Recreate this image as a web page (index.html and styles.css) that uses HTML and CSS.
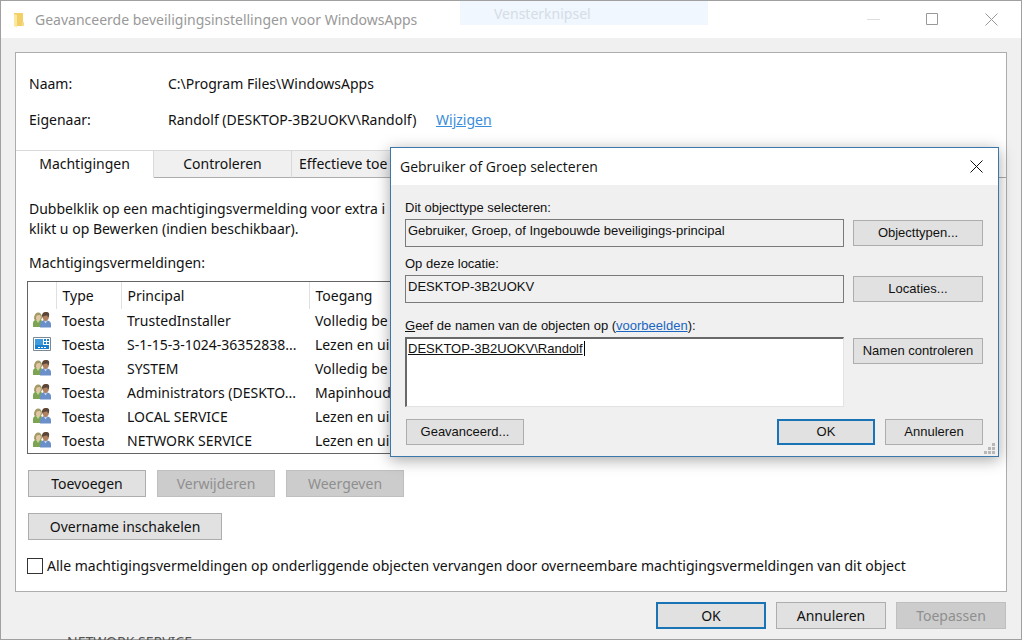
FILE: index.html
```
<!DOCTYPE html>
<html lang="nl">
<head>
    <meta charset="UTF-8">
    <meta name="viewport" content="width=device-width, initial-scale=1.0">
    <title>Geavanceerde beveiligingsinstellingen voor WindowsApps</title>
    <link rel="stylesheet" href="styles.css">
</head>
<body>
    <!-- Shared icons -->
    <svg class="sprite" aria-hidden="true">
        <symbol id="icon-users" viewBox="0 0 18 16">
            <path d="M0 15V11q0-2 2-3l3-1 3 1q2 1 2 3v4z" fill="#7da453"/>
            <path d="M3 8l2 3 2-3v-2H3z" fill="#c5d3a0"/>
            <path d="M1 7q0-6 4-6.500q4 0 4 5.500l-1 2H2z" fill="#a39a69"/>
            <path d="M3.500 3.500L7 3l1 2-1 3-2 1-2-2z" fill="#e0c9a0"/>
            <path d="M7 15.500V12q0-2 2-3l3-1.500 4 1.500q2 1 2 3v3.500z" fill="#6b8fc9"/>
            <path d="M11 8.500l1.500 3 2-3V7H11z" fill="#c6d6ef"/>
            <path d="M9.500 5V3q.5-3 3.500-3t3 3l-.5 4-2 2h-2l-1.500-2z" fill="#b08260"/>
            <path d="M9 4q0-4 4-4t3 4l-1 2-.5-2.500-4 .5L10 6z" fill="#5a4638"/>
        </symbol>
        <symbol id="icon-app" viewBox="0 0 18 14">
            <path d="M.5.5h17v13H.5z" fill="#fff" stroke="#7b8793"/>
            <path d="M2 2h14v10H2z" fill="#1b7fd0"/>
            <path d="M2 2h8v6H2z" fill="#3f9ade"/>
            <path d="M10.500 2v6M13.500 2v6M10 4.500h6M10 7.500h6" stroke="#fff" fill="none"/>
            <path d="M5 10.500h2M8 10.500h2M11 10.500h2" stroke="#fff" fill="none"/>
        </symbol>
        <symbol id="icon-close" viewBox="0 0 13 13">
            <path d="M.5.5l12 12M12.500.5l-12 12" fill="none" stroke="currentColor"/>
        </symbol>
    </svg>

    <main class="window">
        <header class="titlebar">
            <svg class="folder" viewBox="0 0 12 16" width="12" height="16" aria-hidden="true">
                <path d="M1 1h9v13H1z" fill="#f3cf68"/>
                <path d="M1 2l3 1v12.500L1 14z" fill="#fbe6a2"/>
                <path d="M9 10h2v4H9z" fill="#f7dc8a"/>
            </svg>
            <h1>Geavanceerde beveiligingsinstellingen voor WindowsApps</h1>
            <div class="window-controls">
                <button type="button" class="minimize" aria-label="Minimaliseren"><svg width="13" height="13"><path d="M0 6.500h13" stroke="currentColor"/></svg></button>
                <button type="button" aria-label="Maximaliseren"><svg width="13" height="13"><path d="M.5.5h11v11H.5z" fill="none" stroke="currentColor"/></svg></button>
                <button type="button" aria-label="Sluiten"><svg width="13" height="13"><use href="#icon-close"/></svg></button>
            </div>
            <span class="snip-hint">Vensterknipsel</span>
        </header>

        <div class="content">
            <section class="panel">
                <dl class="info">
                    <dt>Naam:</dt>
                    <dd>C:\Program Files\WindowsApps</dd>
                    <dt>Eigenaar:</dt>
                    <dd>Randolf (DESKTOP-3B2UOKV\Randolf) <a href="#">Wijzigen</a></dd>
                </dl>

                <div class="tabs" role="tablist">
                    <button type="button" class="tab active" role="tab" aria-selected="true">Machtigingen</button>
                    <button type="button" class="tab" role="tab">Controleren</button>
                    <button type="button" class="tab tab-effective" role="tab">Effectieve toe</button>
                </div>

                <div class="tab-page">
                    <p class="help">Dubbelklik op een machtigingsvermelding voor extra i<br>klikt u op Bewerken (indien beschikbaar).</p>
                    <p class="list-label" id="entries-label">Machtigingsvermeldingen:</p>

                    <div class="list">
                        <table aria-labelledby="entries-label">
                            <thead>
                                <tr><th class="col-icon"></th><th class="col-type">Type</th><th class="col-principal">Principal</th><th>Toegang</th></tr>
                            </thead>
                            <tbody>
                                <tr><td><svg width="18" height="16"><use href="#icon-users"/></svg></td><td>Toesta</td><td>TrustedInstaller</td><td>Volledig be</td></tr>
                                <tr><td><svg width="18" height="14"><use href="#icon-app"/></svg></td><td>Toesta</td><td>S-1-15-3-1024-36352838...</td><td>Lezen en ui</td></tr>
                                <tr><td><svg width="18" height="16"><use href="#icon-users"/></svg></td><td>Toesta</td><td>SYSTEM</td><td>Volledig be</td></tr>
                                <tr><td><svg width="18" height="16"><use href="#icon-users"/></svg></td><td>Toesta</td><td>Administrators (DESKTO...</td><td>Mapinhoud</td></tr>
                                <tr><td><svg width="18" height="16"><use href="#icon-users"/></svg></td><td>Toesta</td><td>LOCAL SERVICE</td><td>Lezen en ui</td></tr>
                                <tr><td><svg width="18" height="16"><use href="#icon-users"/></svg></td><td>Toesta</td><td>NETWORK SERVICE</td><td>Lezen en ui</td></tr>
                            </tbody>
                        </table>
                    </div>

                    <div class="actions">
                        <button type="button" class="btn">Toevoegen</button>
                        <button type="button" class="btn" disabled>Verwijderen</button>
                        <button type="button" class="btn" disabled>Weergeven</button>
                    </div>
                    <div class="actions">
                        <button type="button" class="btn btn-wide">Overname inschakelen</button>
                    </div>

                    <div class="replace">
                        <input type="checkbox" id="replace-all">
                        <label for="replace-all">Alle machtigingsvermeldingen op onderliggende objecten vervangen door overneembare machtigingsvermeldingen van dit object</label>
                    </div>
                </div>
            </section>

            <footer class="footer">
                <button type="button" class="btn btn-default">OK</button>
                <button type="button" class="btn">Annuleren</button>
                <button type="button" class="btn" disabled>Toepassen</button>
            </footer>
        </div>
        <!-- Sliver of the list in the window behind -->
        <div class="behind" aria-hidden="true">NETWORK SERVICE</div>
    </main>

    <form class="dialog" role="dialog" aria-labelledby="dialog-title">
        <header class="dialog-title">
            <h2 id="dialog-title">Gebruiker of Groep selecteren</h2>
            <button type="button" class="dialog-close" aria-label="Sluiten"><svg width="13" height="13"><use href="#icon-close"/></svg></button>
        </header>
        <div class="dialog-body">
            <label class="field-label" for="object-type">Dit objecttype selecteren:</label>
            <input class="readonly" id="object-type" type="text" value="Gebruiker, Groep, of Ingebouwde beveiligings-principal" readonly>
            <button type="button" class="btn">Objecttypen...</button>

            <label class="field-label" for="location">Op deze locatie:</label>
            <input class="readonly" id="location" type="text" value="DESKTOP-3B2UOKV" readonly>
            <button type="button" class="btn">Locaties...</button>

            <div class="field-label names-label"><label for="names"><u>G</u>eef de namen van de objecten op</label> (<a href="#">voorbeelden</a>):</div>
            <div class="names-box">
                <textarea class="names" id="names" spellcheck="false">DESKTOP-3B2UOKV\Randolf</textarea>
                <span class="caret"></span>
            </div>
            <button type="button" class="btn">Namen controleren</button>
        </div>
        <div class="dialog-footer">
            <button type="button" class="btn btn-advanced">Geavanceerd...</button>
            <button type="submit" class="btn btn-default">OK</button>
            <button type="button" class="btn">Annuleren</button>
        </div>
        <svg class="grip" width="12" height="12" aria-hidden="true">
            <path d="M8 0h3v3H8zM8 4h3v3H8zM8 8h3v3H8zM4 4h3v3H4zM4 8h3v3H4zM0 8h3v3H0z" fill="#b8b8b8"/>
        </svg>
    </form>
</body>
</html>
```
FILE: styles.css
```
* {
    box-sizing: border-box;
}
body {
    margin: 0;
    background: #fff;
    font-family: "Noto Sans", "Open Sans", sans-serif;
    font-size: 14px;
    line-height: 20px;
    color: #111;
}
h1, h2, p, dl, dd {
    margin: 0;
    font-size: 14px;
    font-weight: normal;
}
button {
    font: inherit;
    color: inherit;
}
a {
    color: #3a8ddb;
}
svg {
    display: block;
}
.sprite {
    position: absolute;
    width: 0;
    height: 0;
}

/* Main window */
.window {
    position: relative;
    min-height: 100vh;
    border: 1px solid #a0a0a0;
    background: #f0f0f0;
}
.titlebar {
    position: relative;
    display: flex;
    align-items: center;
    height: 37px;
    padding-left: 12px;
    background: #fff;
    color: #999;
}
.titlebar h1 {
    flex: 1;
    margin-left: 10px;
}
.window-controls {
    display: flex;
}
.window-controls button {
    display: flex;
    align-items: center;
    justify-content: center;
    width: 59px;
    height: 37px;
    padding: 0;
    border: none;
    background: none;
}
.window-controls .minimize {
    color: #ddd;
}
.snip-hint {
    position: absolute;
    top: 0;
    left: 459px;
    width: 248px;
    height: 24px;
    padding-left: 34px;
    line-height: 26px;
    background: #f0f7fe;
    color: #d5dde5;
}
.content {
    padding: 14px 14px 9px;
}
.panel {
    border: 1px solid #adadad;
    background: #fff;
}
.info {
    display: grid;
    grid-template-columns: 139px 1fr;
    row-gap: 16px;
    padding: 21px 13px 20px;
}
.info a {
    margin-left: 16px;
}

.tabs {
    display: flex;
    height: 28px;
    border-bottom: 1px solid #adadad;
}
.tab {
    width: 138px;
    height: 28px;
    padding: 0;
    border: 1px solid #d9d9d9;
    border-width: 1px 1px 0 0;
    border-bottom: 1px solid #adadad;
    background: #f0f0f0;
}
.tab.active {
    border-bottom-color: #fff;
    background: #fff;
}
.tab-effective {
    padding-left: 7px;
    text-align: left;
}

.tab-page {
    padding: 21px 11px 15px;
}
.help,
.list-label {
    padding-left: 2px;
}
.list-label {
    margin: 14px 0 8px;
}
.list {
    border: 1px solid #646464;
    background: #fff;
}
table {
    width: 100%;
    table-layout: fixed;
    border-collapse: collapse;
}
th, td {
    height: 24px;
    padding: 0 0 0 6px;
    text-align: left;
    font-weight: normal;
    white-space: nowrap;
}
td:first-child {
    padding: 0 0 2px 5px;
}
th {
    height: 27px;
    border-right: 1px solid #e0e0e0;
}
.col-icon {
    width: 28px;
}
.col-type {
    width: 65px;
}
.col-principal {
    width: 188px;
}

/* Buttons */
.btn {
    height: 27px;
    padding: 0;
    border: 1px solid #adadad;
    background: #e1e1e1;
}
.btn:disabled {
    border-color: #bfbfbf;
    background: #ccc;
    color: #8f8f8f;
}
.btn-default {
    border: 2px solid #1a73b5;
}
.actions {
    display: flex;
    gap: 11px;
    margin-top: 16px;
    padding-left: 1px;
}
.actions .btn {
    width: 118px;
}
.actions .btn-wide {
    width: 194px;
}
.replace {
    display: flex;
    align-items: center;
    gap: 4px;
    margin-top: 16px;
    white-space: nowrap;
}
.replace input {
    appearance: none;
    width: 16px;
    height: 16px;
    margin: 0;
    border: 1px solid #333;
    background: #fff;
}
.footer {
    display: flex;
    justify-content: flex-end;
    gap: 10px;
    margin-top: 10px;
    padding-right: 1px;
}
.footer .btn {
    width: 110px;
}
.behind {
    position: absolute;
    bottom: -1px;
    left: 66px;
    height: 3px;
    overflow: hidden;
    line-height: 10px;
    color: #555;
}

/* Select user dialog, floats over the main window */
.dialog {
    position: absolute;
    top: 147px;
    left: 390px;
    width: 609px;
    border: 1px solid #3a78ab;
    background: #f0f0f0;
    box-shadow: 0 3px 14px rgba(0, 0, 0, 0.35);
    font-family: "Liberation Sans", Arial, sans-serif;
    font-size: 13px;
    line-height: 16px;
}
.dialog-title {
    display: flex;
    align-items: center;
    justify-content: space-between;
    height: 37px;
    padding: 0 15px 0 9px;
    background: #fff;
    font-family: "Open Sans", "Noto Sans", sans-serif;
}
.dialog-close {
    padding: 0;
    border: none;
    background: none;
}
.dialog-body {
    display: grid;
    grid-template-columns: 1fr 130px;
    column-gap: 9px;
    padding: 15px 15px 0 14px;
}
.field-label {
    grid-column: 1 / -1;
    margin-bottom: 3px;
}
.names-label {
    margin-top: 6px;
}
.dialog-body .btn {
    align-self: start;
    height: 26px;
    margin-top: 1px;
}
.readonly {
    height: 28px;
    margin-bottom: 9px;
    padding: 0 2px 6px;
    border: 1px solid #7a7a7a;
    background: #f0f0f0;
    font: inherit;
    color: inherit;
    outline: none;
}
.names-box {
    position: relative;
}
.names {
    display: block;
    width: 100%;
    height: 70px;
    padding: 2px 1px;
    border: 1px solid #e3e3e3;
    border-top: 2px solid #696969;
    border-left: 2px solid #696969;
    background: #fff;
    font: inherit;
    color: inherit;
    text-decoration: underline;
    outline: none;
    resize: none;
    caret-color: transparent;
}
.caret {
    position: absolute;
    top: 4px;
    left: 179px;
    width: 1px;
    height: 15px;
    background: #000;
}
.dialog-body a {
    color: #1a66c0;
}
.dialog-footer {
    display: flex;
    gap: 10px;
    padding: 12px 15px 11px;
}
.dialog-footer .btn {
    width: 98px;
    height: 26px;
}
.dialog-footer .btn-advanced {
    width: 118px;
    margin-right: auto;
}
.grip {
    position: absolute;
    right: 2px;
    bottom: 1px;
}
```
